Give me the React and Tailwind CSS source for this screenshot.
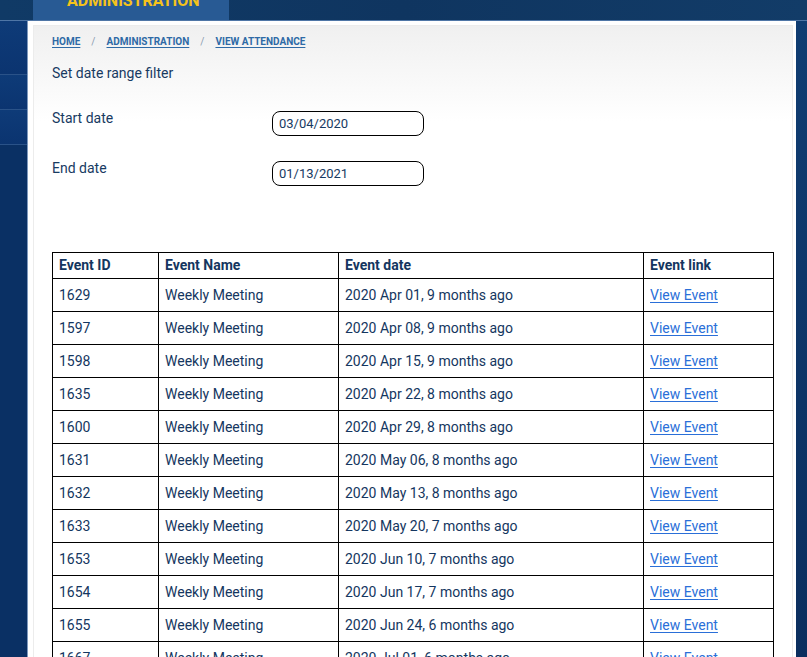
import React from "react";

const rows = [
  ["1629", "2020 Apr 01, 9 months ago"],
  ["1597", "2020 Apr 08, 9 months ago"],
  ["1598", "2020 Apr 15, 9 months ago"],
  ["1635", "2020 Apr 22, 8 months ago"],
  ["1600", "2020 Apr 29, 8 months ago"],
  ["1631", "2020 May 06, 8 months ago"],
  ["1632", "2020 May 13, 8 months ago"],
  ["1633", "2020 May 20, 7 months ago"],
  ["1653", "2020 Jun 10, 7 months ago"],
  ["1654", "2020 Jun 17, 7 months ago"],
  ["1655", "2020 Jun 24, 6 months ago"],
  ["1667", "2020 Jul 01, 6 months ago"],
];

export default function App() {
  return (
    <div
      className="h-screen overflow-hidden bg-[#0c315f] flex flex-col"
      style={{ fontFamily: "Roboto, 'Liberation Sans', sans-serif" }}
    >
      {/* top bar */}
      <div className="h-[21px] shrink-0 flex bg-gradient-to-r from-[#103a66] via-[#0f3560] to-[#123c68] border-b border-[#4f76a6] overflow-hidden">
        <div className="ml-[33px] w-[196px] h-[21px] bg-[#285a94] overflow-hidden">
          <div className="-mt-[9px] pl-[34px] leading-[20px] text-[16px] font-bold text-[#f5c21b]">
            ADMINISTRATION
          </div>
        </div>
      </div>

      <div className="flex flex-1 min-h-0">
        {/* left sidebar */}
        <div className="w-[28px] shrink-0 flex flex-col border-r border-[#7d98bd]">
          <div className="h-[54px] bg-gradient-to-b from-[#0e3b78] to-[#0b3470] border-b border-[#2a5288]" />
          <div className="h-[35px] bg-gradient-to-b from-[#0e3b78] to-[#0b3470] border-b border-[#2a5288]" />
          <div className="h-[35px] bg-gradient-to-b from-[#0e3b78] to-[#0b3470] border-b border-[#2a5288]" />
          <div className="flex-1 bg-[#0a3064]" />
        </div>

        {/* main panel */}
        <div className="flex-1 bg-white pt-[4px] pl-[5px] pr-[3px] overflow-hidden">
          <div className="bg-[linear-gradient(to_bottom,#f0f0f0,#fbfbfb_70px,#ffffff_95px)] min-h-[700px] border-t border-l border-r border-[#ececec] pl-[18px] pb-10">
            {/* breadcrumb */}
            <div className="pt-[10px] flex items-center text-[10px] font-bold text-[#2e6aa6] leading-[12px]">
              <span className="underline underline-offset-[2px]">HOME</span>
              <span className="mx-[11px] font-normal text-[#8a9bb0]">/</span>
              <span className="underline underline-offset-[2px]">ADMINISTRATION</span>
              <span className="mx-[11px] font-normal text-[#8a9bb0]">/</span>
              <span className="underline underline-offset-[2px]">VIEW ATTENDANCE</span>
            </div>

            <div className="mt-[16px] text-[14px] leading-[18px] text-[#173a62]">
              Set date range filter
            </div>

            <div className="mt-[27px] flex items-start">
              <div className="w-[220px] text-[14px] leading-[18px] text-[#173a62]">
                Start date
              </div>
              <div className="mt-[2px] w-[152px] h-[25px] rounded-[8px] border border-black flex items-center pl-[6px] text-[13px] text-[#173a62]">
                03/04/2020
              </div>
            </div>

            <div className="mt-[23px] flex items-start">
              <div className="w-[220px] text-[14px] leading-[18px] text-[#173a62]">
                End date
              </div>
              <div className="mt-[2px] w-[152px] h-[25px] rounded-[8px] border border-black flex items-center pl-[6px] text-[13px] text-[#173a62]">
                01/13/2021
              </div>
            </div>

            <table className="mt-[66px] border-collapse text-[14px] text-[#143660]">
              <thead>
                <tr className="h-[26px]">
                  <th className="w-[106px] border border-black text-left font-bold pl-[6px] p-0">Event ID</th>
                  <th className="w-[180px] border border-black text-left font-bold pl-[6px] p-0">Event Name</th>
                  <th className="w-[305px] border border-black text-left font-bold pl-[6px] p-0">Event date</th>
                  <th className="w-[130px] border border-black text-left font-bold pl-[6px] p-0">Event link</th>
                </tr>
              </thead>
              <tbody>
                {rows.map(([id, date]) => (
                  <tr key={id} className="h-[33px]">
                    <td className="border border-black pl-[6px]">{id}</td>
                    <td className="border border-black pl-[6px]">Weekly Meeting</td>
                    <td className="border border-black pl-[6px]">{date}</td>
                    <td className="border border-black pl-[6px]">
                      <span className="text-[#2a6fd8] underline underline-offset-[2px]">View Event</span>
                    </td>
                  </tr>
                ))}
              </tbody>
            </table>
          </div>
        </div>

        {/* right gutter */}
        <div className="w-[11px] shrink-0 bg-gradient-to-b from-[#103d72] to-[#0b2e5e]" />
      </div>
    </div>
  );
}
